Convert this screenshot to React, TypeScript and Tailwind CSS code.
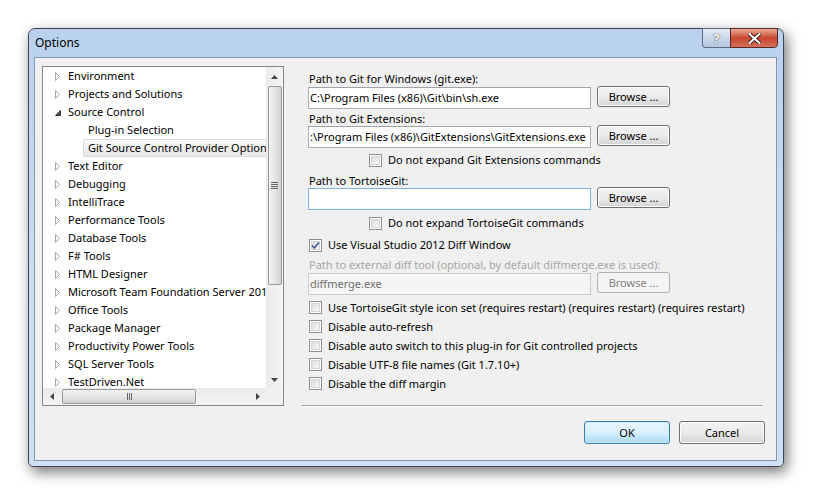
import React from 'react'

type TreeItem = { label: string; kind: 'collapsed' | 'expanded' | 'child'; selected?: boolean }

const treeItems: TreeItem[] = [
  { label: 'Environment', kind: 'collapsed' },
  { label: 'Projects and Solutions', kind: 'collapsed' },
  { label: 'Source Control', kind: 'expanded' },
  { label: 'Plug-in Selection', kind: 'child' },
  { label: 'Git Source Control Provider Options', kind: 'child', selected: true },
  { label: 'Text Editor', kind: 'collapsed' },
  { label: 'Debugging', kind: 'collapsed' },
  { label: 'IntelliTrace', kind: 'collapsed' },
  { label: 'Performance Tools', kind: 'collapsed' },
  { label: 'Database Tools', kind: 'collapsed' },
  { label: 'F# Tools', kind: 'collapsed' },
  { label: 'HTML Designer', kind: 'collapsed' },
  { label: 'Microsoft Team Foundation Server 2012', kind: 'collapsed' },
  { label: 'Office Tools', kind: 'collapsed' },
  { label: 'Package Manager', kind: 'collapsed' },
  { label: 'Productivity Power Tools', kind: 'collapsed' },
  { label: 'SQL Server Tools', kind: 'collapsed' },
  { label: 'TestDriven.Net', kind: 'collapsed' },
]

function Arrow({ expanded }: { expanded: boolean }) {
  if (expanded) {
    return (
      <svg width="6" height="9" viewBox="0 0 6 9">
        <path d="M5.5 2.5 L5.5 7.5 L0.5 7.5 Z" fill="#595959" stroke="#333" strokeWidth="1" />
      </svg>
    )
  }
  return (
    <svg width="6" height="9" viewBox="0 0 6 9">
      <path d="M0.5 0.5 L4.5 4.5 L0.5 8.5 Z" fill="#fff" stroke="#a6a6a6" strokeWidth="1" />
    </svg>
  )
}

function Checkbox({ checked }: { checked?: boolean }) {
  return (
    <span className="relative flex h-[13px] w-[13px] shrink-0 items-center justify-center border border-[#8e8f8f] bg-white">
      <span className="h-[9px] w-[9px] border border-[#d5d5d5] bg-gradient-to-br from-[#dcdcdc] to-[#f8f8f8]" />
      {checked && (
        <svg className="absolute left-[1px] top-[1px]" width="9" height="9" viewBox="0 0 9 9">
          <path d="M1 4.5 L3.3 7 L8 1.5" fill="none" stroke="#4a5f97" strokeWidth="1.8" />
        </svg>
      )}
    </span>
  )
}

function BrowseButton({ disabled }: { disabled?: boolean }) {
  return disabled ? (
    <div className="flex h-[21px] w-[73px] shrink-0 items-center justify-center rounded-[3px] border border-[#adb2b5] bg-[#f4f4f4] text-[#838383]">
      Browse ...
    </div>
  ) : (
    <div className="flex h-[21px] w-[73px] shrink-0 items-center justify-center rounded-[3px] border border-[#707070] bg-gradient-to-b from-[#f2f2f2] via-[#ebebeb] to-[#d4d4d4] shadow-[inset_0_0_0_1px_#fcfcfc]">
      Browse ...
    </div>
  )
}

function TextBox({ value, focus, disabled }: { value?: string; focus?: boolean; disabled?: boolean }) {
  const border = focus ? 'border-[#7eb4ea]' : disabled ? 'border-[#c9cbce]' : 'border-[#abadb3] border-t-[#a0a3aa]'
  const bg = disabled ? 'bg-[#f4f4f4] text-[#6d6d6d]' : 'bg-white text-black'
  return (
    <div className={`ml-[6px] mt-[1px] flex h-[22px] w-[283px] shrink-0 items-center overflow-hidden whitespace-nowrap border pl-[1px] ${border} ${bg}`}>
      {value}
    </div>
  )
}

function CheckRow({ label, indent, checked, h }: { label: string; indent: string; checked?: boolean; h: string }) {
  return (
    <div className={`flex items-center ${h} ${indent}`}>
      <Checkbox checked={checked} />
      <span className="ml-[6px] whitespace-nowrap">{label}</span>
    </div>
  )
}

function VScrollbar() {
  return (
    <div className="flex h-full w-[17px] flex-col items-center bg-gradient-to-r from-[#eaeaea] to-[#f4f4f4]">
      <div className="flex h-[19px] w-full items-center justify-center">
        <svg width="7" height="4" viewBox="0 0 7 4"><path d="M3.5 0 L7 4 L0 4 Z" fill="#444" /></svg>
      </div>
      <div className="flex h-[199px] w-[14px] items-center justify-center rounded-[2px] border border-[#9a9a9a] bg-gradient-to-r from-[#f2f2f2] via-[#e6e6e6] to-[#d2d2d2]">
        <div className="flex flex-col gap-[1px]">
          <span className="h-[1px] w-[7px] bg-[#666]" />
          <span className="h-[1px] w-[7px] bg-[#666]" />
          <span className="h-[1px] w-[7px] bg-[#666]" />
          <span className="h-[1px] w-[7px] bg-[#666]" />
        </div>
      </div>
      <div className="flex-1" />
      <div className="flex h-[17px] w-full items-center justify-center">
        <svg width="7" height="4" viewBox="0 0 7 4"><path d="M0 0 L7 0 L3.5 4 Z" fill="#444" /></svg>
      </div>
    </div>
  )
}

function HScrollbar() {
  return (
    <div className="flex h-full w-[223px] items-center bg-gradient-to-b from-[#eaeaea] to-[#f4f4f4]">
      <div className="flex h-full w-[18px] items-center justify-center">
        <svg width="4" height="7" viewBox="0 0 4 7"><path d="M0 3.5 L4 0 L4 7 Z" fill="#444" /></svg>
      </div>
      <div className="ml-[1px] flex h-[15px] w-[134px] items-center justify-center rounded-[2px] border border-[#9a9a9a] bg-gradient-to-b from-[#f2f2f2] via-[#e6e6e6] to-[#d2d2d2]">
        <div className="flex gap-[1px]">
          <span className="h-[7px] w-[1px] bg-[#666]" />
          <span className="h-[7px] w-[1px] bg-[#666]" />
          <span className="h-[7px] w-[1px] bg-[#666]" />
        </div>
      </div>
      <div className="flex-1" />
      <div className="flex h-full w-[17px] items-center justify-center">
        <svg width="4" height="7" viewBox="0 0 4 7"><path d="M0 0 L4 3.5 L0 7 Z" fill="#444" /></svg>
      </div>
    </div>
  )
}

export default function App() {
  return (
    <div className="h-[493px] w-[819px] overflow-hidden bg-white pt-[28px] font-['Noto_Sans',sans-serif] text-[11px] leading-[16px] text-black">
      <div className="ml-[28px] flex h-[439px] w-[756px] flex-col rounded-t-[7px] rounded-b-[5px] border border-[#3a4654] bg-gradient-to-b from-[#b9d1ee] via-[#c7dbf2] to-[#cfe0f4] pb-[5px] pl-[5px] pr-[6px] shadow-[3px_5px_14px_rgba(0,0,0,0.55)]">
        {/* Title bar */}
        <div className="relative h-[28px] shrink-0">
          <span className="absolute left-[1px] top-[6px] text-[12px]">Options</span>
          <div className="absolute right-[-1px] top-[-1px] flex h-[20px]">
            <div className="flex w-[28px] items-center justify-center rounded-bl-[4px] border border-r-0 border-[#5a6b80] bg-gradient-to-b from-[#e4edf8] via-[#c9d8ea] to-[#b3c7df] text-[13px] font-bold text-white [text-shadow:0_0_1px_#333,0_0_1px_#333]">
              ?
            </div>
            <div className="flex w-[48px] items-center justify-center rounded-br-[4px] border border-[#5a2a22] bg-gradient-to-b from-[#e9a99a] via-[#c8452d] to-[#d4705a]">
              <svg width="13" height="11" viewBox="0 0 13 11">
                <path d="M1.5 1 L11.5 10 M11.5 1 L1.5 10" stroke="#3c1a14" strokeWidth="4" strokeLinecap="round" />
                <path d="M1.5 1 L11.5 10 M11.5 1 L1.5 10" stroke="#fff" strokeWidth="2.2" strokeLinecap="round" />
              </svg>
            </div>
          </div>
        </div>

        {/* Client area */}
        <div className="flex flex-1 flex-col border border-[#8497ad] bg-[#f0f0f0]">
          <div className="flex h-[348px] items-start pl-[7px] pt-[8px]">
            {/* Tree */}
            <div className="flex h-[340px] w-[242px] shrink-0 flex-col border border-[#828790] bg-white">
              <div className="flex h-[321px]">
                <div className="w-[223px] overflow-hidden">
                  {treeItems.map((item) => (
                    <div key={item.label} className="flex h-[18px] items-center whitespace-nowrap">
                      {item.kind === 'child' ? (
                        <div
                          className={`ml-[40px] flex h-[18px] flex-1 items-center rounded-[2px] pl-[4px] ${
                            item.selected ? 'border border-[#d9d9d9] bg-gradient-to-b from-[#f8f8f8] to-[#e8e8e8]' : 'border border-transparent'
                          }`}
                        >
                          {item.label}
                        </div>
                      ) : (
                        <>
                          <span className="ml-[12px] flex w-[6px] items-center">
                            <Arrow expanded={item.kind === 'expanded'} />
                          </span>
                          <span className="ml-[7px]">{item.label}</span>
                        </>
                      )}
                    </div>
                  ))}
                </div>
                <VScrollbar />
              </div>
              <div className="flex h-[17px]">
                <HScrollbar />
                <div className="w-[17px] bg-[#f0f0f0]" />
              </div>
            </div>

            {/* Settings */}
            <div className="ml-[18px] flex w-[460px] flex-col">
              <div className="mt-[5px] h-[15px] pl-[7px]">Path to Git for Windows (git.exe):</div>
              <div className="flex h-[23px] items-start">
                <TextBox value="C:\Program Files (x86)\Git\bin\sh.exe" />
                <div className="ml-[6px]"><BrowseButton /></div>
              </div>
              <div className="mt-[2px] h-[14px] pl-[7px]">Path to Git Extensions:</div>
              <div className="flex h-[23px] items-start">
                <TextBox value=":\Program Files (x86)\GitExtensions\GitExtensions.exe" />
                <div className="ml-[6px]"><BrowseButton /></div>
              </div>
              <div className="mt-[3px]">
                <CheckRow label="Do not expand Git Extensions commands" indent="pl-[67px]" h="h-[18px]" />
              </div>
              <div className="mt-[4px] h-[14px] pl-[7px]">Path to TortoiseGit:</div>
              <div className="flex h-[23px] items-start">
                <TextBox focus />
                <div className="ml-[6px]"><BrowseButton /></div>
              </div>
              <div className="mt-[4px]">
                <CheckRow label="Do not expand TortoiseGit commands" indent="pl-[67px]" h="h-[18px]" />
              </div>
              <div className="mt-[4px]">
                <CheckRow label="Use Visual Studio 2012 Diff Window" indent="pl-[7px]" h="h-[18px]" checked />
              </div>
              <div className="mt-[3px] h-[15px] pl-[7px] text-[#a6a6a6]">
                Path to external diff tool (optional, by default diffmerge.exe is used):
              </div>
              <div className="flex h-[23px] items-start">
                <TextBox value="diffmerge.exe" disabled />
                <div className="ml-[6px]"><BrowseButton disabled /></div>
              </div>
              <div className="mt-[3px] flex flex-col">
                <CheckRow label="Use TortoiseGit style icon set (requires restart) (requires restart) (requires restart)" indent="pl-[7px]" h="h-[19px]" />
                <CheckRow label="Disable auto-refresh" indent="pl-[7px]" h="h-[19px]" />
                <CheckRow label="Disable auto switch to this plug-in for Git controlled projects" indent="pl-[7px]" h="h-[19px]" />
                <CheckRow label="Disable UTF-8 file names (Git 1.7.10+)" indent="pl-[7px]" h="h-[19px]" />
                <CheckRow label="Disable the diff margin" indent="pl-[7px]" h="h-[19px]" />
              </div>
              <div className="mt-[12px] h-[2px] border-t border-b border-t-[#a0a0a0] border-b-white" />
            </div>
          </div>

          {/* Dialog buttons */}
          <div className="mt-[15px] flex justify-end gap-[9px] pr-[11px]">
            <div className="flex h-[23px] w-[86px] items-center justify-center rounded-[3px] border border-[#3c7fb1] bg-gradient-to-b from-[#eaf6fd] via-[#d9f0fc] to-[#a7d9f5] shadow-[inset_0_0_0_1px_#c8eafd]">
              OK
            </div>
            <div className="flex h-[23px] w-[86px] items-center justify-center rounded-[3px] border border-[#707070] bg-gradient-to-b from-[#f2f2f2] via-[#ebebeb] to-[#d4d4d4] shadow-[inset_0_0_0_1px_#fcfcfc]">
              Cancel
            </div>
          </div>
        </div>
      </div>
    </div>
  )
}
